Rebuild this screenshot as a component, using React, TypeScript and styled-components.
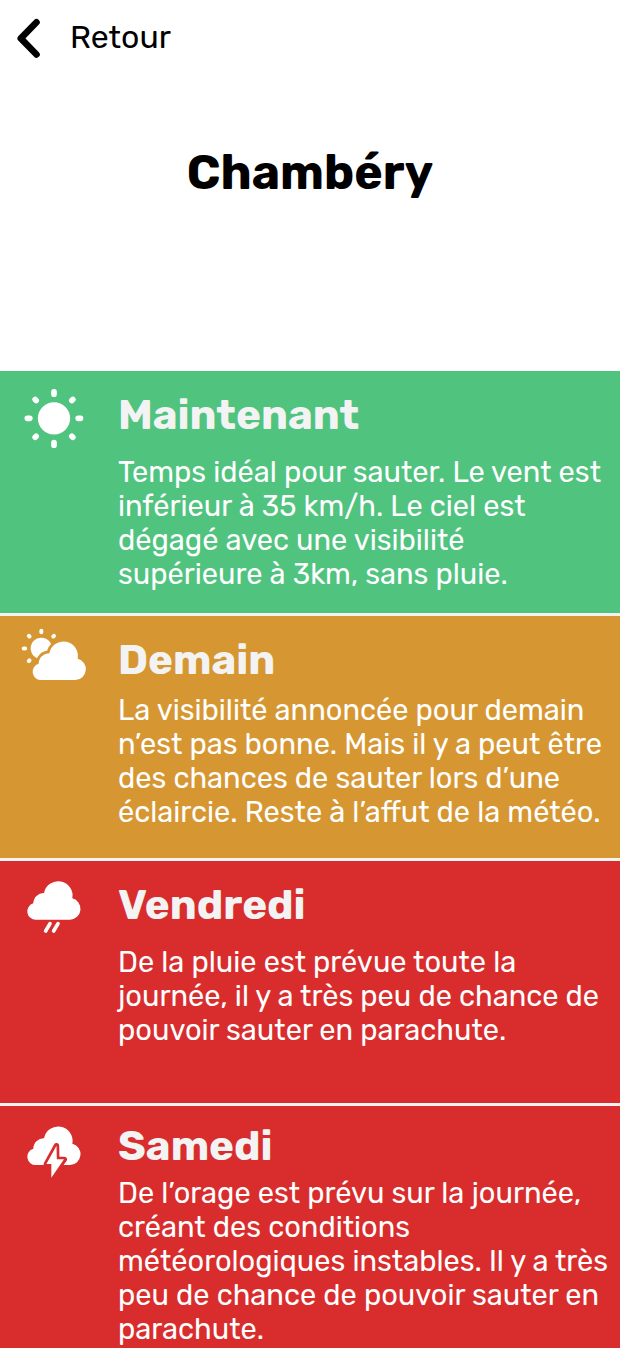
import React from "react";
import styled, { createGlobalStyle } from "styled-components";

const GlobalStyle = createGlobalStyle`
  *, *::before, *::after { box-sizing: border-box; }
  body {
    margin: 0;
    background: #ffffff;
    color: #000000;
    font-family: Rubik, Inter, "Liberation Sans", sans-serif;
  }
`;

const Page = styled.div`
  width: 100%;
`;

const Header = styled.header`
  padding: 16px 16px 0;
`;

const BackButton = styled.button`
  display: flex;
  align-items: center;
  gap: 29px;
  height: 44px;
  padding: 0;
  border: 0;
  background: none;
  color: inherit;
  font-family: inherit;
  font-size: 32px;
  line-height: 40px;
  cursor: pointer;
`;

const BackLabel = styled.span`
  padding-bottom: 2px;
`;

const City = styled.h1`
  margin: 0;
  padding: 84px 16px 169px;
  font-size: 48px;
  line-height: 58px;
  font-weight: 700;
  text-align: center;
`;

const Forecasts = styled.main`
  display: flex;
  flex-direction: column;
  gap: 3px;
  background: #f3f3f3;
`;

const Card = styled.section<{ $color: string }>`
  display: grid;
  grid-template-columns: 100px minmax(0, 1fr);
  column-gap: 8px;
  min-height: 242px;
  padding: 0 8px 0 10px;
  background: ${(p) => p.$color};
`;

const CardBody = styled.div<{ $top: number }>`
  padding-top: ${(p) => p.$top}px;
`;

const Day = styled.h2`
  margin: 0;
  color: #f3f3f3;
  font-size: 42px;
  line-height: 48px;
  font-weight: 700;
`;

const Advice = styled.p<{ $gap: number }>`
  margin: ${(p) => p.$gap}px 0 0;
  color: #ffffff;
  font-size: 29px;
  line-height: 34px;
`;

const Icon = styled.svg`
  display: block;
  width: 100px;
  height: 90px;
`;

const CLOUD =
  "M78 209H180A32.500 32.500 0 0 0 187 145A42.800 42.800 0 0 0 102 129A31 31 0 0 0 70 160A25 25 0 0 0 78 209Z";

const AMBER = "#d69733";
const GREEN = "#50c37f";
const RED = "#d92d2d";

const SunIcon = () => (
  <Icon viewBox="0 3 300 270" aria-hidden="true">
    <circle cx="132" cy="145" r="48.500" fill="#fff" />
    <g stroke="#fff" strokeWidth="17" strokeLinecap="round">
      <path d="M132 65.500V72.500M132 218V225.500M52 145H59.500M204.500 145H211.500" />
      <path d="M75.500 88.500L78.500 91.500M188.500 88.500L185.500 91.500M75.500 201.500L78.500 198.500M188.500 201.500L185.500 198.500" />
    </g>
  </Icon>
);

const SunCloudIcon = () => (
  <Icon viewBox="0 33 300 270" aria-hidden="true">
    <circle cx="94" cy="130" r="32" fill="#fff" />
    <g stroke="#fff" strokeWidth="12" strokeLinecap="round">
      <path d="M94 77.500V82M41 130.500H45.500" />
      <path d="M56.500 92.500L58.500 94.500M132 92.500L130 94.500M56.500 168L58.500 166" />
    </g>
    <g transform="translate(16 16)">
      <path d={CLOUD} fill="#fff" stroke={AMBER} strokeWidth="17" />
      <path d={CLOUD} fill="#fff" />
    </g>
  </Icon>
);

const RainIcon = () => (
  <Icon viewBox="0 33 300 270" aria-hidden="true">
    <path d={CLOUD} fill="#fff" />
    <path d="M120 221L107 243M144 221L131 243" stroke="#fff" strokeWidth="11" strokeLinecap="round" />
  </Icon>
);

const StormIcon = () => (
  <Icon viewBox="0 33 300 270" aria-hidden="true">
    <path d={CLOUD} transform="translate(0 1)" fill="#fff" />
    <path
      d="M139.500 152L109 207H124V247L163 193H140.500Z"
      fill="#fff"
      stroke={RED}
      strokeWidth="16"
      strokeLinejoin="round"
    />
    <path d="M139.500 152L109 207H124V248L162 193H140.500Z" fill="#fff" />
  </Icon>
);

const forecasts = [
  {
    day: "Maintenant",
    advice:
      "Temps idéal pour sauter. Le vent est inférieur à 35 km/h. Le ciel est dégagé avec une visibilité supérieure à 3km, sans pluie.",
    color: GREEN,
    icon: <SunIcon />,
    top: 20,
    gap: 16,
  },
  {
    day: "Demain",
    advice:
      "La visibilité annoncée pour demain n’est pas bonne. Mais il y a peut être des chances de sauter lors d’une éclaircie. Reste à l’affut de la météo.",
    color: AMBER,
    icon: <SunCloudIcon />,
    top: 20,
    gap: 9,
  },
  {
    day: "Vendredi",
    advice:
      "De la pluie est prévue toute la journée, il y a très peu de chance de pouvoir sauter en parachute.",
    color: RED,
    icon: <RainIcon />,
    top: 20,
    gap: 16,
  },
  {
    day: "Samedi",
    advice:
      "De l’orage est prévu sur la journée, créant des conditions météorologiques instables. Il y a très peu de chance de pouvoir sauter en parachute.",
    color: RED,
    icon: <StormIcon />,
    top: 16,
    gap: 6,
  },
];

export default function App() {
  return (
    <Page>
      <GlobalStyle />
      <Header>
        <BackButton type="button">
          <svg width="25" height="44" viewBox="16 16 25 44" fill="none" aria-hidden="true">
            <path
              d="M36.500 22.300L20.800 38.400L36.500 54.500"
              stroke="#000"
              strokeWidth="6.600"
              strokeLinecap="round"
              strokeLinejoin="round"
            />
          </svg>
          <BackLabel>Retour</BackLabel>
        </BackButton>
      </Header>
      <City>Chambéry</City>
      <Forecasts>
        {forecasts.map((f) => (
          <Card key={f.day} $color={f.color}>
            {f.icon}
            <CardBody $top={f.top}>
              <Day>{f.day}</Day>
              <Advice $gap={f.gap}>{f.advice}</Advice>
            </CardBody>
          </Card>
        ))}
      </Forecasts>
    </Page>
  );
}
